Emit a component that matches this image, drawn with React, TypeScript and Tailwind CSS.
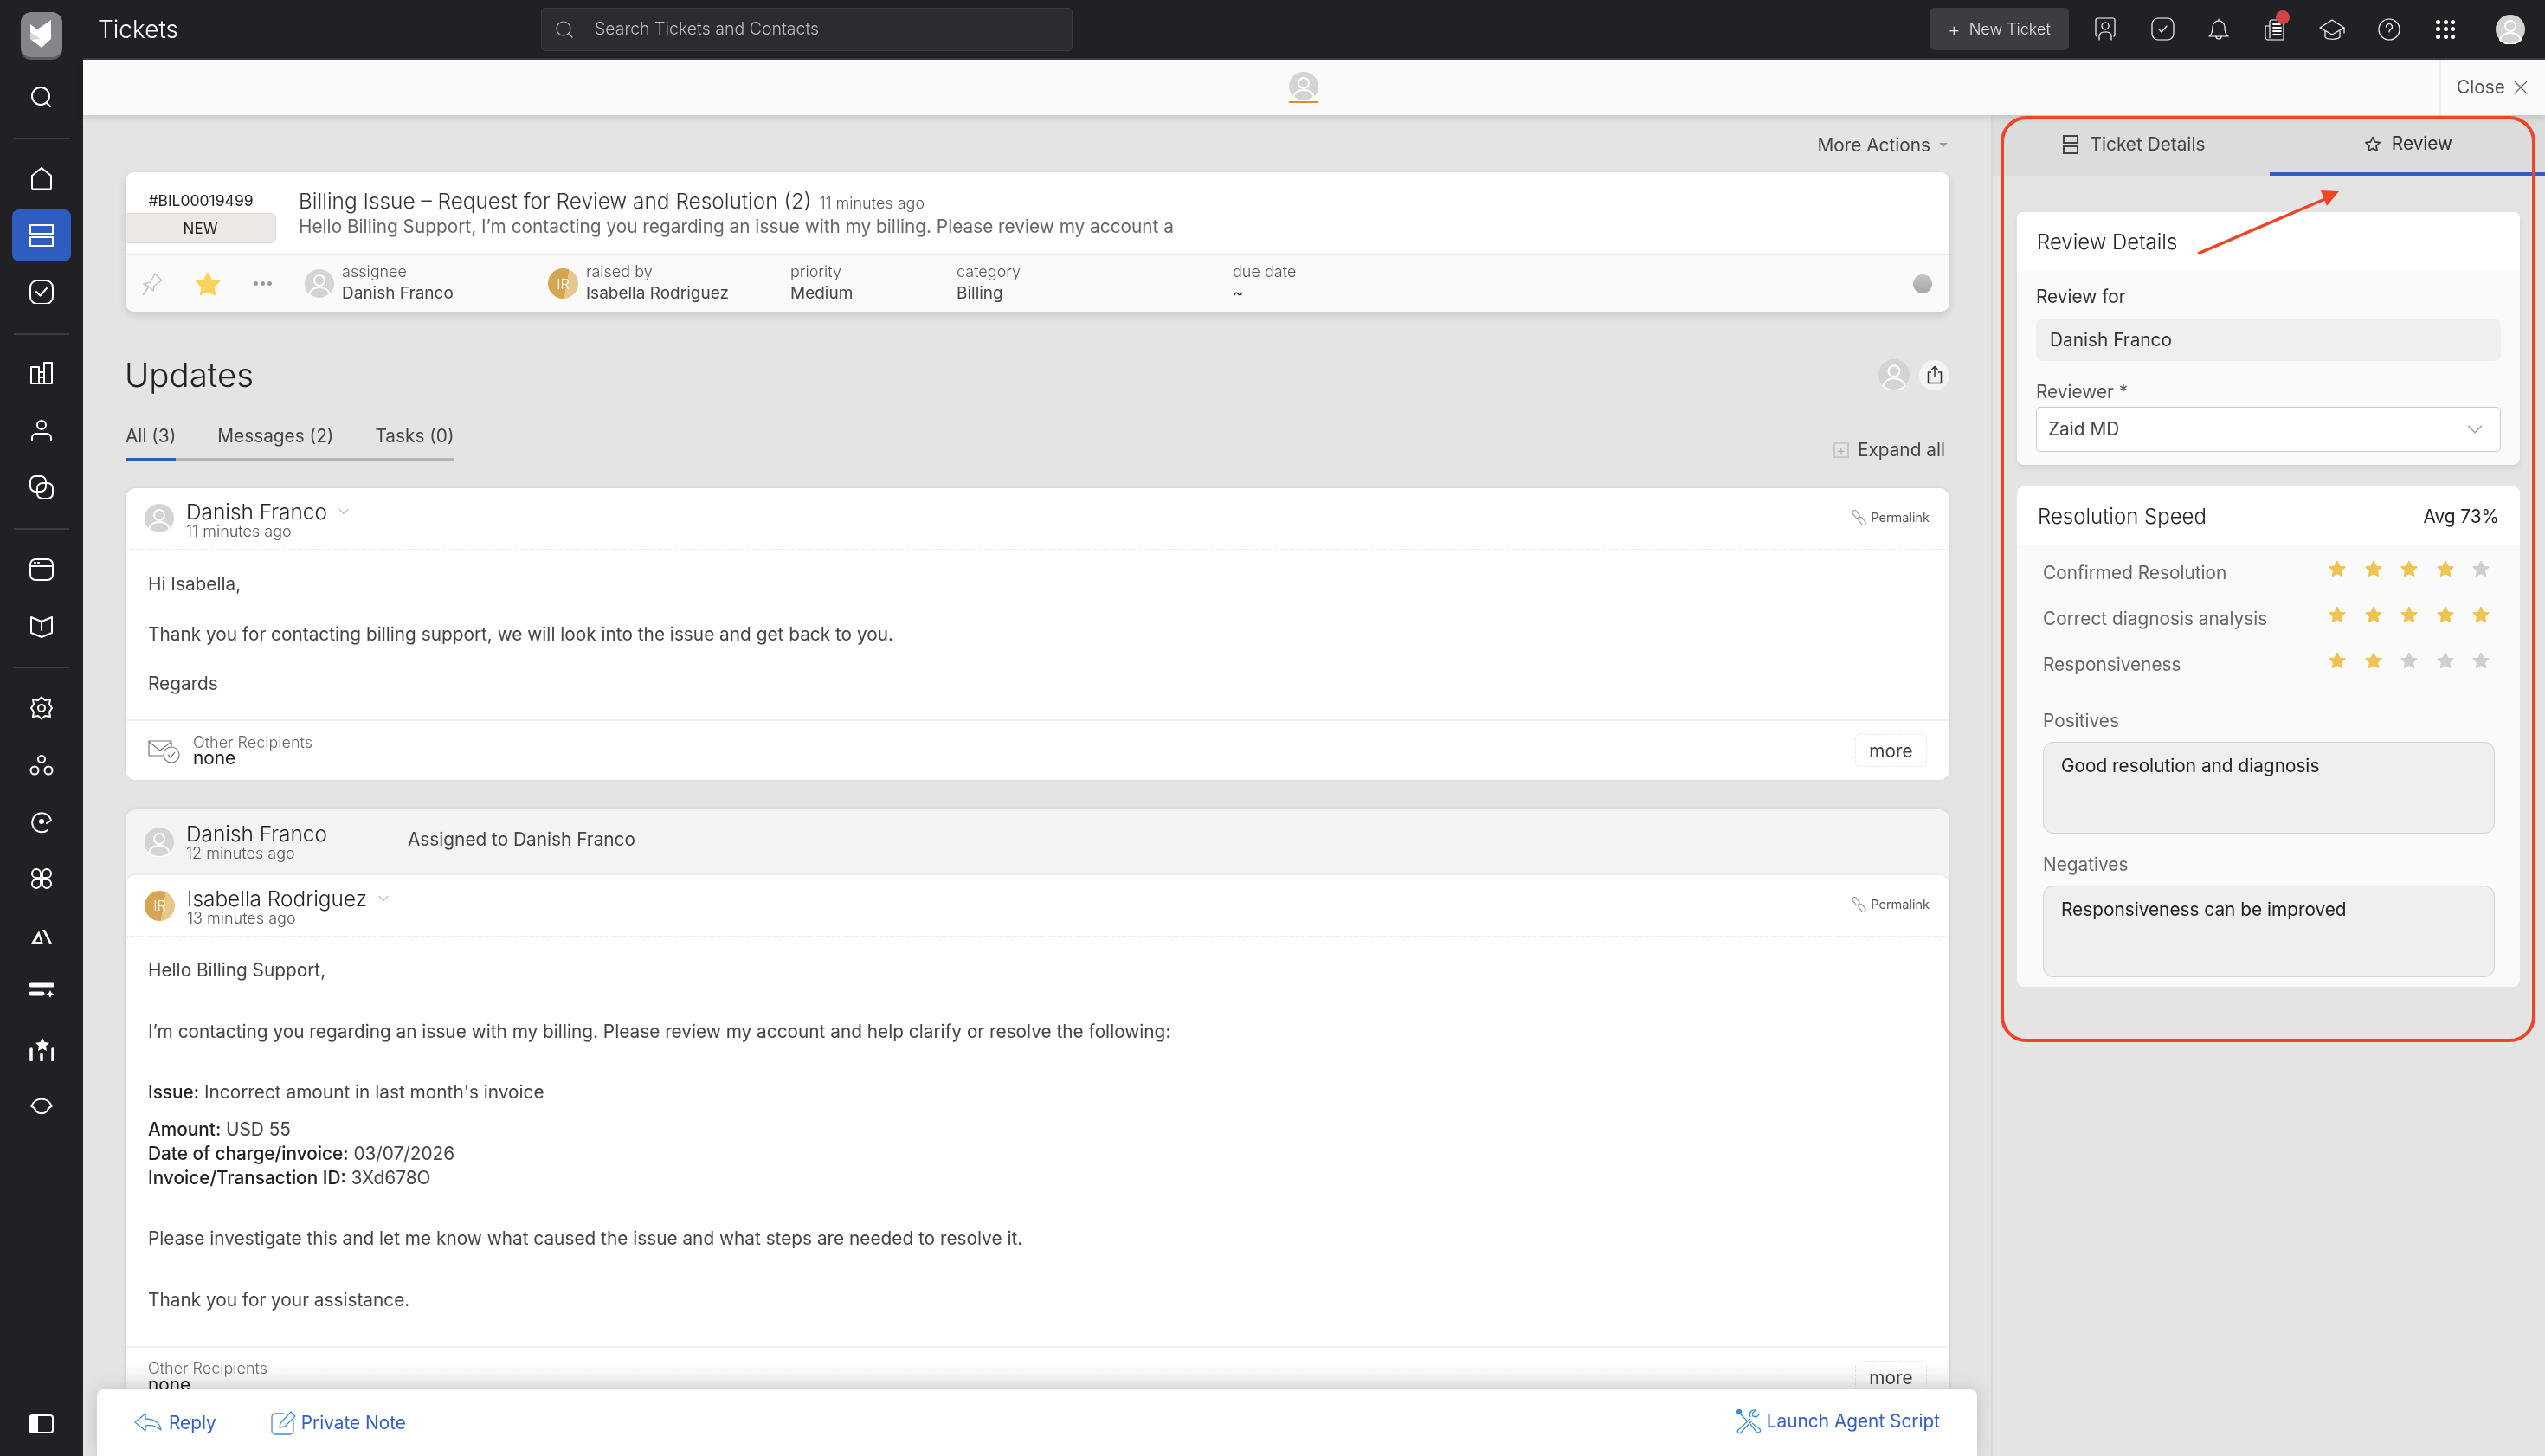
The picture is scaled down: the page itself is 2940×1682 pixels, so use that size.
import { ChevronDown, Search, X } from "lucide-react";
import type { ReactNode } from "react";

function SideSvg({ children }: { children: ReactNode }) {
  return (
    <svg width="28" height="28" viewBox="0 0 28 28" fill="none" stroke="#fff" strokeWidth="2" strokeLinecap="round" strokeLinejoin="round">
      {children}
    </svg>
  );
}

const lowerIcons: ReactNode[] = [
  <>
    <path d="M14 1.500l4 3.500 6 -1 -1 5.500 3 4.500 -3 4.500 1 5.500 -6 -1 -4 3.500 -4 -3.500 -6 1 1 -5.500 -3 -4.500 3 -4.500 -1 -5.500 6 1z" />
    <circle cx="14" cy="14" r="4" />
  </>,
  <>
    <circle cx="14" cy="7" r="4" />
    <circle cx="6" cy="20" r="4.500" />
    <circle cx="22" cy="20" r="4.500" />
  </>,
  <>
    <path d="M25 13a11 11 0 1 0 -4 11" />
    <path d="M25 13l-5 3" />
    <circle cx="14" cy="14" r="2" fill="#fff" />
  </>,
  <>
    <path d="M13 13H7a5 5 0 1 1 6-5zM15 13h6a5 5 0 1 0-6-5zM13 15H7a5 5 0 1 0 6 5zM15 15h6a5 5 0 1 1-6 5z" />
  </>,
  <>
    <path d="M1.500 24L11 8l5 16zM7 21l4-7 2 7z" fill="#fff" stroke="none" fillRule="evenodd" />
    <path d="M15 7l8.500 17h3L18 7z" fill="#fff" stroke="none" />
  </>,
  <>
    <path d="M2 6h25" strokeWidth="5" />
    <path d="M2 16h13" strokeWidth="5" />
    <path d="M24 12l1.500 3 3 1.500 -3 1.500 -1.500 3 -1.500 -3 -3 -1.500 3 -1.500z" fill="#fff" stroke="none" />
  </>,
  <>
    <path d="M15 1l2.500 5 5.500 .7 -4 3.800 1 5.500 -5 -2.700 -5 2.700 1 -5.500 -4 -3.800 5.500 -.7z" fill="#fff" stroke="none" />
    <path d="M2 14v13M14 20v7M27 14v13" strokeWidth="3.500" />
  </>,
  <>
    <path d="M2.500 14a12 12 0 0 1 23 0" />
    <path d="M2.500 14c3 1 4 3 5 5M25.500 14c-3 1-4 3-5 5" />
    <path d="M8 20a9 9 0 0 0 12 0" />
  </>,
];

function Sidebar() {
  return (
    <aside className="flex w-[96px] shrink-0 flex-col items-center bg-[#1f2125]">
      <div className="flex h-[79px] items-center">
        <div className="flex h-[52px] w-[48px] items-center justify-center rounded-[12px] bg-[#85868a] shadow-[0_3px_0_#5c5d60]">
          <svg width="30" height="36" viewBox="0 0 30 36">
            <path d="M2 6l8 6 16-11v22l-11 10-13-10z" fill="#fff" />
            <path d="M2 15l12 8 -12 1z" fill="#85868a" opacity=".35" />
          </svg>
        </div>
      </div>
      <div className="flex h-[66px] items-center">
        <SideSvg>
          <circle cx="13" cy="13" r="10" />
          <path d="M20 21l4 4" />
        </SideSvg>
      </div>
      <div className="mt-[14px] h-[2px] w-[64px] bg-[#3b3d41]" />
      <div className="mt-[12px] flex h-[66px] items-center">
        <SideSvg>
          <path d="M3 11L14 2l11 9v14a1.500 1.500 0 0 1-1.500 1.500h-19A1.500 1.500 0 0 1 3 25z" />
        </SideSvg>
      </div>
      <div className="mt-[3px] flex h-[60px] w-[68px] items-center justify-center rounded-[8px] bg-[#2f5cbf]">
        <SideSvg>
          <rect x="1" y="2" width="26" height="10" />
          <rect x="1" y="16" width="26" height="10" />
        </SideSvg>
      </div>
      <div className="flex h-[70px] items-center">
        <SideSvg>
          <rect x="1" y="1" width="26" height="27" rx="8" />
          <path d="M8 14l4.500 4.500L20 10" />
        </SideSvg>
      </div>
      <div className="mt-[13px] h-[2px] w-[64px] bg-[#3b3d41]" />
      <div className="mt-[11px] flex h-[66px] items-center">
        <SideSvg>
          <path d="M2 7h9v6h6V2h9v24H2zM11 13v13M17 13v13M11 19h6" />
        </SideSvg>
      </div>
      <div className="flex h-[66px] items-center">
        <SideSvg>
          <circle cx="14" cy="8" r="5" />
          <path d="M3 25v-2a5 5 0 0 1 5-5h12a5 5 0 0 1 5 5v2" />
        </SideSvg>
      </div>
      <div className="flex h-[66px] items-center">
        <SideSvg>
          <rect x="1" y="1" width="18" height="18" rx="6" />
          <rect x="9" y="9" width="18" height="18" rx="6" />
        </SideSvg>
      </div>
      <div className="mt-[14px] h-[2px] w-[64px] bg-[#3b3d41]" />
      <div className="mt-[13px] flex h-[66px] items-center">
        <SideSvg>
          <rect x="1" y="2" width="26" height="24" rx="6" />
          <path d="M1 10h26M6 6h1M10 6h1" />
        </SideSvg>
      </div>
      <div className="flex h-[66px] items-center">
        <SideSvg>
          <path d="M2 3l12 5 12-5v18l-12 5-12-5zM14 8v10" />
        </SideSvg>
      </div>
      <div className="mt-[13px] h-[2px] w-[64px] bg-[#3b3d41]" />
      <div className="mt-[13px]" />
      {lowerIcons.map((icon, i) => (
        <div key={i} className="flex h-[65.7px] items-center">
          <SideSvg>{icon}</SideSvg>
        </div>
      ))}
      <div className="mt-auto mb-[25px] flex items-center">
        <svg width="28" height="24" viewBox="0 0 28 24" fill="none" stroke="#fff" strokeWidth="2">
          <rect x="1" y="2" width="26" height="20" rx="3" />
          <rect x="1" y="2" width="8" height="20" rx="2" fill="#fff" />
        </svg>
      </div>
    </aside>
  );
}

function TopIcon({ children, dot }: { children: ReactNode; dot?: boolean }) {
  return (
    <div className="relative flex h-[69px] w-[65.500px] items-center justify-center">
      <svg width="30" height="30" viewBox="0 0 30 30" fill="none" stroke="#fff" strokeWidth="1.200" strokeLinecap="round" strokeLinejoin="round">
        {children}
      </svg>
      {dot && <span className="absolute top-[13px] left-[33px] h-[16px] w-[16px] rounded-full bg-[#d24545]" />}
    </div>
  );
}

function TopBar() {
  return (
    <header className="flex h-[69px] shrink-0 items-center border-b-2 border-[#3a3c40] bg-[#1f2125]">
      <h1 className="ml-[17px] w-[512px] text-[28px] font-light text-white">Tickets</h1>
      <div className="flex h-[50px] w-[614px] items-center gap-[23px] rounded-[5px] border border-[#3a3c40] bg-[#2a2c30] pl-[14px]">
        <Search size={24} strokeWidth={1.200} className="text-[#b9bcc0]" />
        <span className="text-[19.500px] font-light text-[#b9bcc0]">Search Tickets and Contacts</span>
      </div>
      <div className="ml-auto flex h-[49px] w-[160px] items-center justify-center gap-[10px] rounded-[5px] bg-[#3b3d42] text-[18px] font-light text-[#e3e4e6]">
        <span className="text-[22px] leading-none">+</span>
        <span>New Ticket</span>
      </div>
      <div className="ml-[10px] flex items-center">
        <TopIcon>
          <path d="M5 23a2 2 0 0 1-1-2V4a2 2 0 0 1 2-2h18a2 2 0 0 1 2 2v17a2 2 0 0 1-1 2" />
          <circle cx="15" cy="11" r="4" />
          <path d="M8 27v-4a5 5 0 0 1 5-5h4a5 5 0 0 1 5 5v4" />
        </TopIcon>
        <TopIcon>
          <rect x="3" y="2" width="25" height="25" rx="7" />
          <path d="M11 15l3 3 6-7" />
        </TopIcon>
        <TopIcon>
          <path d="M4 23c3-2 4-5 4-11a7 7 0 0 1 14 0c0 6 1 9 4 11z" />
          <path d="M12 23a3 3 0 0 0 6 0" />
          <path d="M15 5V3" />
        </TopIcon>
        <TopIcon dot>
          <path d="M8 25V6a2 2 0 0 1 2-2h12a2 2 0 0 1 2 2v21H6a3 3 0 0 1-3-3V11h5" />
          <path d="M12 9h8M12 13h9M12 17h9M12 21h9" strokeWidth="1.800" />
        </TopIcon>
        <TopIcon>
          <path d="M15 4L1 13l14 8 14-8z" />
          <path d="M7 17v7c2 3 14 3 17 0v-7M29 13v6" />
        </TopIcon>
        <TopIcon>
          <circle cx="15" cy="15" r="12" />
          <path d="M11.500 12a3.500 3.500 0 1 1 5 3.200c-1 .6-1.500 1.300-1.500 2.800M15 21.500v.3" />
        </TopIcon>
        <div className="grid h-[69px] w-[65.500px] place-content-center">
          <div className="grid grid-cols-3 gap-[3.500px]">
            {Array.from({ length: 9 }).map((_, i) => (
              <span key={i} className="h-[5px] w-[5px] rounded-full bg-white" />
            ))}
          </div>
        </div>
      </div>
      <div className="ml-[25px] mr-[23px]">
        <Person size={34} />
      </div>
    </header>
  );
}

function Person({ size }: { size: number }) {
  return (
    <svg width={size} height={size} viewBox="0 0 34 34" className="block shrink-0">
      <circle cx="17" cy="17" r="17" fill="#d4d4d4" />
      <circle cx="17" cy="13" r="6" fill="none" stroke="#fff" strokeWidth="2" />
      <path d="M5 29c2-6 7-8 12-8s10 2 12 8a17 17 0 0 1-24 0z" fill="none" stroke="#fff" strokeWidth="2" />
    </svg>
  );
}

function Initials({ size }: { size: number }) {
  return (
    <div
      className="flex shrink-0 items-center justify-center rounded-full bg-[linear-gradient(100deg,#d5a552_60%,#e6c88c_60%)] text-[16px] font-light text-white"
      style={{ width: size, height: size }}
    >
      IR
    </div>
  );
}

function RoundStar({ color, size }: { color: string; size: number }) {
  return (
    <svg width={size} height={size} viewBox="0 0 24 24" className="block">
      <path d="M12 2.500l3 6.300 6.800 .9 -5 4.700 1.300 6.800 -6.100 -3.300 -6.100 3.300 1.300 -6.800 -5 -4.700 6.800 -.9z" fill={color} stroke={color} strokeWidth="1.500" strokeLinejoin="round" />
    </svg>
  );
}

function MetaItem({ label, value, width }: { label: string; value: string; width: string }) {
  return (
    <div className={`${width} -mt-[3px]`}>
      <div className="text-[18px] leading-[25px] font-light text-[#555]">{label}</div>
      <div className="text-[19px] leading-[25px] text-[#444]">{value}</div>
    </div>
  );
}

function TicketCard() {
  return (
    <section className="overflow-hidden rounded-[10px] bg-white shadow-[0_4px_10px_rgba(0,0,0,0.13)]">
      <div className="flex h-[96px] border-b-2 border-[#e8e8e8]">
        <div className="w-[174px] shrink-0 pt-[21px]">
          <div className="text-center text-[17.500px] leading-[24px] text-[#222]">#BIL00019499</div>
          <div className="mt-[2px] flex h-[35px] items-center justify-center rounded-r-[6px] border border-l-0 border-[#dcd9d7] bg-[#ece8e6] pt-[2px] text-[17px] text-[#222]">NEW</div>
        </div>
        <div className="ml-[26px] pt-[18px]">
          <div className="flex items-baseline">
            <span className="text-[24.400px] leading-[30px] font-light text-[#333]">Billing Issue – Request for Review and Resolution (2)</span>
            <span className="ml-[9px] text-[18px] font-light text-[#555]">11 minutes ago</span>
          </div>
          <div className="-mt-[1px] text-[20.800px] leading-[30px] text-[#666]">Hello Billing Support, I’m contacting you regarding an issue with my billing. Please review my account a</div>
        </div>
      </div>
      <div className="flex h-[65px] items-center bg-[#fafafa]">
        <svg width="26" height="30" viewBox="0 0 26 30" fill="none" stroke="#c4c4c4" strokeWidth="1.500" strokeLinejoin="round" className="ml-[18px]">
          <path d="M2 28l7-10-6-3 8-2 5-10 8 8-9 6-1 6-4-4" />
        </svg>
        <div className="ml-[35px]">
          <RoundStar color="#fad45a" size={32} />
        </div>
        <div className="ml-[37px] flex gap-[3px]">
          <span className="h-[5px] w-[5px] rounded-full bg-[#999]" />
          <span className="h-[5px] w-[5px] rounded-full bg-[#999]" />
          <span className="h-[5px] w-[5px] rounded-full bg-[#999]" />
        </div>
        <div className="ml-[38px] flex w-[281px] items-center gap-[9px]">
          <Person size={34} />
          <MetaItem label="assignee" value="Danish Franco" width="w-[200px]" />
        </div>
        <div className="flex w-[280px] items-center gap-[9px]">
          <Initials size={35} />
          <MetaItem label="raised by" value="Isabella Rodriguez" width="w-[200px]" />
        </div>
        <MetaItem label="priority" value="Medium" width="w-[192px]" />
        <MetaItem label="category" value="Billing" width="w-[319px]" />
        <MetaItem label="due date" value="~" width="w-[200px]" />
        <div className="mr-[20px] ml-auto h-[22px] w-[22px] rounded-full bg-[linear-gradient(180deg,#c4c4c4,#a6a6a6)]" />
      </div>
    </section>
  );
}

function Permalink() {
  return (
    <div className="flex items-center gap-[4px] text-[14.500px] text-[#555]">
      <svg width="19" height="20" viewBox="0 0 19 20" fill="none" stroke="#999" strokeWidth="1.200">
        <rect x="-5" y="-2.500" width="10" height="5" rx="2.500" transform="translate(6 6) rotate(50)" />
        <rect x="-5" y="-2.500" width="10" height="5" rx="2.500" transform="translate(13 14) rotate(50)" />
      </svg>
      Permalink
    </div>
  );
}

function MoreButton() {
  return <div className="flex h-[38px] w-[83px] items-center justify-center rounded-[5px] border border-dashed border-[#e8e8e8] text-[20.800px] text-[#444]">more</div>;
}

function CardHeader({ avatar, name, time }: { avatar: ReactNode; name: string; time: string }) {
  return (
    <div className="flex h-[71px] items-center border-b border-dotted border-[#e4e4e4] pr-[23px] pl-[22px]">
      {avatar}
      <div className="ml-[14px] pt-[4px]">
        <div className="flex items-center text-[24.400px] leading-[26px] font-light text-[#222]">
          {name}
          <ChevronDown size={20} strokeWidth={1.200} className="ml-[9px] text-[#888]" />
        </div>
        <div className="text-[18px] leading-[20px] font-light text-[#555]">{time}</div>
      </div>
      <div className="ml-auto -mt-[2px]">
        <Permalink />
      </div>
    </div>
  );
}

function Updates() {
  return (
    <>
      <div className="mt-[48px] flex h-[50px] items-center justify-between">
        <h2 className="-ml-[1px] pt-[2px] text-[38.500px] font-light text-[#222]">Updates</h2>
        <div className="flex items-center gap-[11px]">
          <Person size={36} />
          <div className="flex h-[35px] w-[35px] items-center justify-center rounded-full bg-[#f3f3f3]">
            <svg width="18" height="22" viewBox="0 0 18 22" fill="none" stroke="#333" strokeWidth="1.500">
              <path d="M5 8H1.500v12.500h15V8H13M9 14V1.500M5.500 5L9 1.500 12.500 5" />
            </svg>
          </div>
        </div>
      </div>
      <div className="mt-[28px] flex items-start justify-between">
        <div>
          <div className="flex h-[43px] items-center gap-[48px] pb-[7px] text-[20.800px] text-[#444]">
            <span>All (3)</span>
            <span>Messages (2)</span>
            <span>Tasks (0)</span>
          </div>
          <div className="h-[3px] w-[379px] bg-[#b5b5b5]">
            <div className="h-[3px] w-[58px] bg-[#2f5cbf]" />
          </div>
        </div>
        <div className="mt-[18px] mr-[5px] flex items-center gap-[10px] text-[20.800px] text-[#444]">
          <span className="flex h-[18px] w-[18px] items-center justify-center border-2 border-[#c9c9c9] text-[16px] leading-none text-[#b0b0b0]">+</span>
          Expand all
        </div>
      </div>
    </>
  );
}

function FirstMessage() {
  return (
    <article className="mt-[29px] overflow-hidden rounded-[12px] bg-white shadow-[0_-1px_4px_rgba(0,0,0,0.08)]">
      <CardHeader avatar={<Person size={34} />} name="Danish Franco" time="11 minutes ago" />
      <div className="border-b-2 border-[#f0f0f0] px-[26px] pt-[26px] pb-[27px] text-[20.800px] leading-[28px] text-[#444]">
        <p>Hi Isabella,</p>
        <p className="mt-[30px]">Thank you for contacting billing support, we will look into the issue and get back to you.</p>
        <p className="mt-[29px]">Regards</p>
      </div>
      <div className="flex h-[68px] items-center pr-[26px] pl-[26px]">
        <svg width="38" height="27" viewBox="0 0 38 27" fill="none" stroke="#777" strokeWidth="1.200" className="mt-[3px]">
          <path d="M25 18H1V1h26v9M1 2l13 10L27 2" />
          <circle cx="27" cy="17" r="9" fill="#fff" />
          <path d="M23 17l3 3 5-6" />
        </svg>
        <div className="ml-[14px] -mt-[3px]">
          <div className="text-[18px] leading-[19px] font-light text-[#666]">Other Recipients</div>
          <div className="text-[20.800px] leading-[17px] text-[#222]">none</div>
        </div>
        <div className="ml-auto">
          <MoreButton />
        </div>
      </div>
    </article>
  );
}

function SecondMessage() {
  return (
    <article className="mt-[34px] rounded-[12px] bg-[#f3f3f3] shadow-[0_-1px_4px_rgba(0,0,0,0.08)]">
      <div className="flex h-[76px] items-center pl-[22px]">
        <Person size={34} />
        <div className="ml-[14px] w-[256px]">
          <div className="text-[24.400px] leading-[26px] font-light text-[#222]">Danish Franco</div>
          <div className="text-[18px] leading-[20px] font-light text-[#555]">12 minutes ago</div>
        </div>
        <span className="-mt-[7px] text-[20.800px] text-[#444]">Assigned to Danish Franco</span>
      </div>
      <div className="rounded-t-[12px] bg-white shadow-[0_-1px_3px_rgba(0,0,0,0.07)]">
        <CardHeader avatar={<Initials size={35} />} name="Isabella Rodriguez" time="13 minutes ago" />
        <div className="border-b-2 border-[#f0f0f0] px-[26px] pt-[25px] pb-[39px] text-[20.800px] leading-[28px] text-[#444]">
          <p>Hello Billing Support,</p>
          <p className="mt-[43px]">I’m contacting you regarding an issue with my billing. Please review my account and help clarify or resolve the following:</p>
          <p className="mt-[42px]"><b className="font-medium text-[#222]">Issue:</b> Incorrect amount in last month's invoice</p>
          <p className="mt-[15px]"><b className="font-medium text-[#222]">Amount:</b> USD 55</p>
          <p><b className="font-medium text-[#222]">Date of charge/invoice:</b> 03/07/2026</p>
          <p><b className="font-medium text-[#222]">Invoice/Transaction ID:</b> 3Xd678O</p>
          <p className="mt-[42px]">Please investigate this and let me know what caused the issue and what steps are needed to resolve it.</p>
          <p className="mt-[43px]">Thank you for your assistance.</p>
        </div>
        <div className="flex h-[69px] items-start pt-[14px] pr-[26px] pl-[26px]">
          <div>
            <div className="text-[18px] leading-[19px] font-light text-[#666]">Other Recipients</div>
            <div className="text-[20.800px] leading-[20px] text-[#222]">none</div>
          </div>
          <div className="ml-auto mt-[1px]">
            <MoreButton />
          </div>
        </div>
      </div>
    </article>
  );
}

function ReplyBar() {
  return (
    <>
      <div className="absolute right-[48px] bottom-[77px] left-[49px] h-[32px] bg-[linear-gradient(180deg,#ffffff,#ebebeb)] mix-blend-multiply" />
      <div className="absolute right-[16px] bottom-0 left-[16px] flex h-[77px] items-center rounded-t-[8px] bg-white pr-[43px] pl-[43px] text-[20.800px] text-[#3560c0] shadow-[0_0_20px_rgba(0,0,0,0.16)]">
        <svg width="32" height="24" viewBox="0 0 32 24" fill="none" stroke="#3f8fd0" strokeWidth="1.300" strokeLinejoin="round">
          <path d="M13 1L1 11l12 10v-6c7-1 13 0 18 5-1-8-8-13-18-13z" />
        </svg>
        <span className="ml-[8px]">Reply</span>
        <svg width="30" height="28" viewBox="0 0 30 28" fill="none" stroke="#3f8fd0" strokeWidth="1.300" strokeLinejoin="round" className="ml-[63px]">
          <path d="M15 3H5a4 4 0 0 0-4 4v16a4 4 0 0 0 4 4h17a4 4 0 0 0 4-4V11" />
          <path d="M10 19l1-5L23 1l5 5-12 12z" />
        </svg>
        <span className="ml-[5px]">Private Note</span>
        <svg width="30" height="30" viewBox="0 0 30 30" fill="none" stroke="#3f8fd0" strokeWidth="1.300" strokeLinejoin="round" className="mb-[3px] ml-auto">
          <circle cx="4" cy="4" r="2.500" fill="#3f8fd0" />
          <path d="M5 6l8 8M17 12l-14 13a2 2 0 0 0 3 3l13-14M17 18l7 9a2 2 0 0 0 4-3l-9-7" />
          <path d="M28 6l-4 4-4-1-1-3 4-4c-5-1-8 3-6 8" />
        </svg>
        <span className="mb-[4px] ml-[6px]">Launch Agent Script</span>
      </div>
    </>
  );
}

const ratings = [
  { label: "Confirmed Resolution", filled: 4 },
  { label: "Correct diagnosis analysis", filled: 5 },
  { label: "Responsiveness", filled: 2 },
];

function ReviewPanel() {
  return (
    <aside className="w-[640px] shrink-0 border-l-2 border-[#d8d8d8]">
      <div className="flex h-[70px] bg-[#dcdcdc] text-[20.800px]">
        <div className="flex w-[320px] items-center justify-center gap-[14px] pb-[3px] pl-[6px] text-[#444]">
          <svg width="18" height="24" viewBox="0 0 18 24" fill="none" stroke="#444" strokeWidth="2">
            <rect x="1" y="2" width="16" height="8" />
            <rect x="1" y="14" width="16" height="8" />
          </svg>
          Ticket Details
        </div>
        <div className="flex flex-1 items-center justify-center gap-[12px] border-b-[4px] border-[#2f5cbf] pl-[2px] text-[#333]">
          <svg width="20" height="21" viewBox="0 0 24 24" fill="none" stroke="#333" strokeWidth="2" strokeLinejoin="round">
            <path d="M12 2.500l3 6.300 6.800 .9 -5 4.700 1.300 6.800 -6.100 -3.300 -6.100 3.300 1.300 -6.800 -5 -4.700 6.800 -.9z" />
          </svg>
          Review
        </div>
      </div>
      <div className="mt-[42px] ml-[28px] w-[581px]">
        <section className="h-[292px] overflow-hidden rounded-[8px] bg-[#fafafa] shadow-[0_3px_6px_rgba(0,0,0,0.08)]">
          <div className="flex h-[68px] items-center bg-white pt-[2px] pl-[23px] text-[24px] font-light text-[#222]">Review Details</div>
          <div className="px-[22px] pt-[17px]">
            <div className="text-[20.800px] leading-[26px] font-normal text-[#333]">Review for</div>
            <div className="mt-[12px] flex h-[49px] items-center rounded-[8px] bg-[#efefef] pl-[16px] text-[20.800px] text-[#333]">Danish Franco</div>
            <div className="mt-[23px] text-[20.800px] leading-[26px] text-[#555]">Reviewer *</div>
            <div className="mt-[4px] flex h-[52px] items-center justify-between rounded-[5px] border border-[#ccc] bg-white pr-[14px] pl-[13px] text-[20.800px] text-[#444]">
              Zaid MD
              <ChevronDown size={30} strokeWidth={1.100} className="text-[#999]" />
            </div>
          </div>
        </section>
        <section className="mt-[25px] h-[578px] overflow-hidden rounded-[8px] bg-[#fafafa]">
          <div className="flex h-[68px] items-center justify-between bg-white pt-[2px] pr-[24px] pl-[24px] text-[24px] font-light text-[#222]">
            <span>Resolution Speed</span>
            <span className="text-[20.800px] font-normal">Avg 73%</span>
          </div>
          <div className="mt-[7px] pr-[29px] pl-[30px]">
            {ratings.map((row) => (
              <div key={row.label} className="flex h-[53px] items-start justify-between">
                <span className="pt-[12px] text-[20.800px] leading-[26px] text-[#666]">{row.label}</span>
                <span className="mr-[5px] flex w-[188px] justify-between pt-[9px]">
                  {[0, 1, 2, 3, 4].map((n) => (
                    <RoundStar key={n} size={22} color={n < row.filled ? "#efc352" : "#cfcfcf"} />
                  ))}
                </span>
              </div>
            ))}
            <div className="mt-[24px] text-[20.800px] leading-[26px] text-[#666]">Positives</div>
            <div className="mt-[11px] h-[106px] rounded-[12px] border border-[#d2d2d2] bg-[#efefef] pt-[14px] pl-[20px] text-[20.800px] leading-[26px] text-[#222]">Good resolution and diagnosis</div>
            <div className="mt-[23px] text-[20.800px] leading-[26px] text-[#666]">Negatives</div>
            <div className="mt-[11px] h-[106px] rounded-[12px] border border-[#d2d2d2] bg-[#efefef] pt-[14px] pl-[20px] text-[20.800px] leading-[26px] text-[#222]">Responsiveness can be improved</div>
          </div>
        </section>
      </div>
    </aside>
  );
}

export default function App() {
  return (
    <div className="relative flex h-[1682px] w-[2940px] overflow-hidden bg-[#e4e4e4] [font-family:Inter,sans-serif]">
      <Sidebar />
      <div className="flex min-w-0 flex-1 flex-col">
        <TopBar />
        <div className="relative z-10 flex h-[64px] shrink-0 items-center bg-[#fafafa] shadow-[0_3px_8px_rgba(0,0,0,0.12)]">
          <div className="w-[2722px]">
            <div className="ml-[1393px] w-[34px]">
              <Person size={34} />
              <div className="h-[2px] w-[34px] bg-[#d98b3a]" />
            </div>
          </div>
          <div className="flex h-full flex-1 items-center gap-[4px] border-l-2 border-[#eeeeee] pl-[18px] text-[20.800px] text-[#555]">
            Close
            <X size={28} strokeWidth={1} className="text-[#666]" />
          </div>
        </div>
        <div className="flex min-h-0 flex-1">
          <main className="relative flex-1 overflow-hidden px-[48px] pl-[49px]">
            <div className="flex h-[66px] items-center justify-end gap-[10px] pt-[3px] pr-[2px] text-[20.800px] text-[#444]">
              More Actions
              <span className="h-0 w-0 border-x-[5px] border-t-[5px] border-x-transparent border-t-[#999]" />
            </div>
            <TicketCard />
            <Updates />
            <FirstMessage />
            <SecondMessage />
            <ReplyBar />
          </main>
          <ReviewPanel />
        </div>
      </div>
      <div className="pointer-events-none absolute top-[134px] left-[2311px] z-20 h-[1070px] w-[618px] rounded-[30px] border-[4px] border-[#ee4527]" />
      <svg width="180" height="90" viewBox="0 0 180 90" className="pointer-events-none absolute top-[216px] left-[2530px] z-20">
        <path d="M9 77L158 13" stroke="#ee4527" strokeWidth="3.500" />
        <path d="M172 5L151 4l7 18z" fill="#ee4527" />
      </svg>
    </div>
  );
}
